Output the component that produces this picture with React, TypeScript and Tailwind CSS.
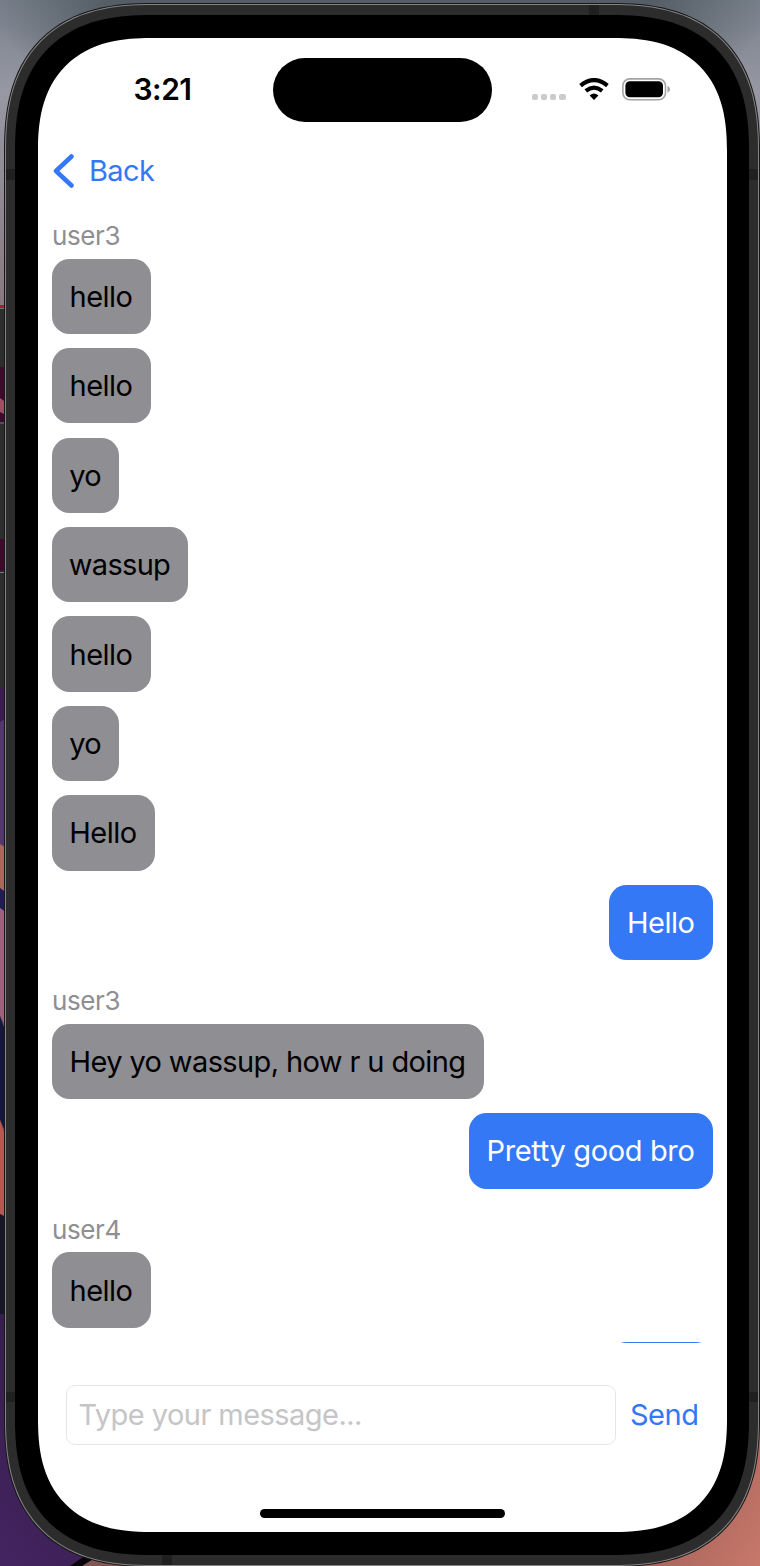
import React from "react";

type Message = { text?: string; mine?: boolean; sender?: string; width: string; spacing?: string };

const messages: Message[] = [
  { text: "hello", sender: "user3", width: "w-[99px]", spacing: "tracking-[-0.5px]" },
  { text: "hello", width: "w-[99px]", spacing: "tracking-[-0.5px]" },
  { text: "yo", width: "w-[67px]", spacing: "tracking-[-0.8px]" },
  { text: "wassup", width: "w-[136px]", spacing: "tracking-[-0.7px]" },
  { text: "hello", width: "w-[99px]", spacing: "tracking-[-0.5px]" },
  { text: "yo", width: "w-[67px]", spacing: "tracking-[-0.8px]" },
  { text: "Hello", width: "w-[103px]", spacing: "tracking-[-0.5px]" },
  { text: "Hello", mine: true, width: "w-[103.500px]", spacing: "tracking-[-0.5px]" },
  { text: "Hey yo wassup, how r u doing", sender: "user3", width: "w-[432px]", spacing: "tracking-[-0.61px]" },
  { text: "Pretty good bro", mine: true, width: "w-[244px]", spacing: "tracking-[-0.35px]" },
  { text: "hello", sender: "user4", width: "w-[99px]", spacing: "tracking-[-0.5px]" },
  { mine: true, width: "w-[103.500px]" },
];

function Wallpaper() {
  return (
    <svg className="absolute inset-0" width="760" height="1566" viewBox="0 0 760 1566" aria-hidden="true">
      <defs>
        <linearGradient id="sky" x1="0" y1="0" x2="0" y2="1">
          <stop offset="0" stopColor="#79818c" />
          <stop offset="0.3" stopColor="#9798a3" />
          <stop offset="1" stopColor="#887880" />
        </linearGradient>
        <radialGradient id="top" gradientUnits="userSpaceOnUse" cx="0" cy="0" r="1" gradientTransform="translate(380 0) scale(390 150)">
          <stop offset="0" stopColor="#555e66" />
          <stop offset="0.7" stopColor="#555e66" />
          <stop offset="1" stopColor="#555e66" stopOpacity="0" />
        </radialGradient>
        <linearGradient id="violet" x1="0" y1="1" x2="1" y2="0.3">
          <stop offset="0" stopColor="#442460" />
          <stop offset="1" stopColor="#29163a" />
        </linearGradient>
        <linearGradient id="coral" x1="1" y1="1" x2="0" y2="0.6">
          <stop offset="0" stopColor="#c8786b" />
          <stop offset="1" stopColor="#71453f" />
        </linearGradient>
      </defs>
      <rect width="760" height="310" fill="url(#sky)" />
      <rect width="760" height="150" fill="url(#top)" />
      <rect y="305" width="8" height="3" fill="#a21f39" />
      <rect y="309" width="8" height="380" fill="#2d2d2d" />
      <path d="M0 308.500H8M0 423H8M0 572.500H8" stroke="#77777a" />
      <path d="M0 367H8V422H0M0 539H8V571H0" fill="#3e0b2d" />
      <path d="M0 398L8 404V416L0 412Z" fill="#a24d64" />
      <rect y="688" width="8" height="34" fill="#3c1b52" />
      <path d="M0 722L8 717V848L0 844Z" fill="#54366e" />
      <path d="M0 844L8 850V894L0 888Z" fill="#ad655c" />
      <path d="M0 888L8 894V914L0 908Z" fill="#211c54" />
      <path d="M0 908L8 914V1030L0 1016Z" fill="#9c627c" />
      <path d="M0 1016L8 1038V1138L0 1120Z" fill="#16163c" />
      <path d="M0 1120L8 1146V1218L0 1214Z" fill="#b95650" />
      <path d="M0 1214L8 1218V1314H0Z" fill="#161629" />
      <rect y="1314" width="300" height="252" fill="url(#violet)" />
      <path d="M70 1566L108 1540L150 1566Z" fill="#08050b" />
      <path d="M82 1566L108 1550H500V1566Z" fill="#835653" />
      <rect x="500" y="1380" width="260" height="186" fill="url(#coral)" />
      <rect x="755" y="310" width="5" height="1080" fill="#665a5e" />
    </svg>
  );
}

function StatusBar() {
  return (
    <div className="flex h-[84px] shrink-0 items-start pt-5">
      <div className="mt-[12px] w-[235px] pl-[96px] text-[30px] leading-[38px] font-semibold tracking-[-0.5px]">3:21</div>
      <div className="h-[64px] w-[219px] rounded-full bg-black" />
      <div className="mt-5 ml-[40px] flex items-start">
        <div className="mt-4 flex gap-[3px]">
          {[0, 1, 2, 3].map((n) => (
            <span key={n} className="size-[6.300px] rounded-[2px] bg-[#cbcbcb]" />
          ))}
        </div>
        <svg className="ml-[13px]" width="30" height="22" viewBox="0 0 30 22">
          <path d="M1.600 7.600Q15 -3.400 28.400 7.600" fill="none" stroke="#000" strokeWidth="4.200" />
          <path d="M6.800 12.900Q15 6.500 23.200 12.900" fill="none" stroke="#000" strokeWidth="4.200" />
          <path d="M10.600 17.600Q15 13.600 19.400 17.600L15 22Z" />
        </svg>
        <svg className="ml-[13.800px]" width="49" height="23" viewBox="0 0 49 23">
          <rect x="0.900" y="0.900" width="42.600" height="20.800" rx="6.800" fill="none" stroke="#a4a4a4" strokeWidth="1.600" />
          <rect x="3.400" y="3.300" width="37.600" height="16" rx="4.500" />
          <path d="M45.500 7.800Q48 9 48 11.200T45.500 14.800Z" fill="#a4a4a4" />
        </svg>
      </div>
    </div>
  );
}

function Bubble({ message }: { message: Message }) {
  return (
    <div className={`flex shrink-0 flex-col ${message.mine ? "items-end" : "items-start"}`}>
      {message.sender && (
        <div className="h-[49.800px] pt-[10px] pl-[0.500px] text-[26px] leading-[34px] tracking-[-0.4px] text-[#8e8e93]">
          {message.sender}
        </div>
      )}
      <div
        className={`flex h-[75.300px] items-center justify-center rounded-[17.500px] pt-px whitespace-nowrap ${message.width} ${message.spacing ?? ""} ${
          message.mine ? "bg-[#3478f6] text-white" : "bg-[#8e8e93] text-black"
        }`}
      >
        {message.text}
      </div>
    </div>
  );
}

export default function App() {
  return (
    <div className="relative flow-root h-[1566px] w-[760px] overflow-hidden bg-[#665a5e] font-['Inter',sans-serif] text-[29px] leading-[38px]">
      <Wallpaper />
      <div className="relative mt-[3px] ml-[4px] h-[1564px] w-[756px] rounded-[148px] bg-[#171717] p-px [corner-shape:superellipse(1.3)]">
        <div className="h-full rounded-[147px] bg-[#858585] p-[1.400px] [corner-shape:superellipse(1.3)]">
          <div className="relative h-full rounded-[146px] bg-[#2c2c2c] px-[8.600px] py-[9.600px] [corner-shape:superellipse(1.3)]">
            <div className="absolute top-0 left-[583px] h-[10px] w-[10px] bg-[#202020]" />
            <div className="absolute bottom-0 left-[156px] h-[10px] w-[10px] bg-[#202020]" />
            <div className="absolute top-[164px] left-0 h-[11px] w-full bg-[#202020]" />
            <div className="absolute top-[1387px] left-0 h-[10px] w-full bg-[#202020]" />
            <div className="relative flex h-full justify-center rounded-[136px] bg-black py-[23px] [corner-shape:superellipse(1.3)]">
              <div className="flex w-[689px] flex-col overflow-hidden rounded-[113px] bg-white [corner-shape:superellipse(1.3)]">
                <StatusBar />
                <div className="flex h-[87px] shrink-0 items-center pt-[11px] pl-[15px] text-[#3478f6]">
                  <svg width="22" height="34" viewBox="0 0 22 34" fill="none" stroke="currentColor" strokeWidth="4.500" strokeLinecap="round" strokeLinejoin="round">
                    <path d="M18.500 2.500L3 17L18.500 31.500" />
                  </svg>
                  <span className="ml-[14.500px] tracking-[-0.6px]">Back</span>
                </div>
                <div className="flex h-[1134px] shrink-0 flex-col gap-[14.120px] overflow-hidden px-[14px]">
                  {messages.map((message, i) => (
                    <Bubble key={i} message={message} />
                  ))}
                </div>
                <div className="mt-[42px] flex h-[60px] shrink-0 items-center pl-7">
                  <input
                    className="h-[60px] w-[550px] rounded-[9px] border-[1.500px] border-[#e6e6e7] bg-white px-[12px] tracking-[-0.55px] outline-none placeholder:text-[#c5c5c7]"
                    placeholder="Type your message..."
                  />
                  <button className="ml-[14.500px] tracking-[-0.5px] text-[#3478f6]">Send</button>
                </div>
                <div className="ml-[222px] mt-[64px] h-[9px] w-[245.500px] shrink-0 rounded-full bg-black" />
              </div>
            </div>
          </div>
        </div>
      </div>
    </div>
  );
}
